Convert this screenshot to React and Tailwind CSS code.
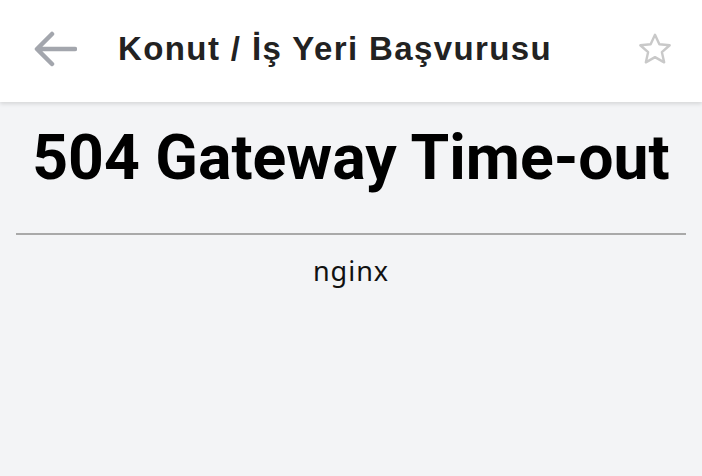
export default function App() {
  return (
    <div className="min-h-[476px] bg-[#f3f4f6]" style={{ fontFamily: 'Roboto, sans-serif' }}>
      {/* Top bar */}
      <div className="h-[102px] bg-white shadow-[0_2px_4px_rgba(0,0,0,0.12)] flex items-center pl-[33px] pr-[28px] pb-[5px] relative z-10">
        <svg width="44" height="36" viewBox="0 0 44 36" fill="none" className="shrink-0">
          <path d="M42 18H5M19 3L4 18l15 15" stroke="#a3a6ad" strokeWidth="4.5" strokeLinecap="round" strokeLinejoin="round" />
        </svg>
        <h1
          className="ml-[41px] text-[33px] font-bold text-[#222] leading-none tracking-[1.4px] flex-1"
          style={{ fontFamily: '"Liberation Sans", Arial, sans-serif' }}
        >
          Konut / İş Yeri Başvurusu
        </h1>
        <svg width="38" height="36" viewBox="0 0 24 24" fill="none" className="shrink-0">
          <path
            d="M12 2.5l2.9 6.3 6.9.7-5.2 4.6 1.5 6.8L12 17.4l-6.1 3.5 1.5-6.8-5.2-4.6 6.9-.7z"
            stroke="#c9c9c9"
            strokeWidth="1.6"
            strokeLinejoin="round"
          />
        </svg>
      </div>

      {/* Error content */}
      <div className="px-4 pt-[18px]">
        <h2 className="text-center text-[62.5px] font-bold text-black leading-[76px]">504 Gateway Time-out</h2>
        <hr className="mt-[37px] border-0 border-t-2 border-[#a9a9a9]" />
        <p
          className="text-center text-[27px] text-[#111] mt-[22px] leading-none tracking-[1px]"
          style={{ fontFamily: '"Noto Sans", sans-serif' }}
        >
          nginx
        </p>
      </div>
    </div>
  );
}
